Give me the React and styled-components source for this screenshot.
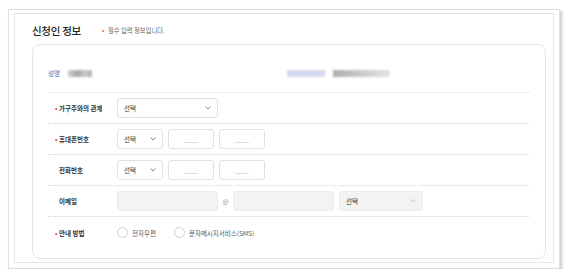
import React from "react";
import styled, { createGlobalStyle } from "styled-components";

const Global = createGlobalStyle`
  html, body { margin: 0; padding: 0; background: #fff; }
  body { font-family: "Noto Sans CJK KR", "Noto Sans", sans-serif; color: #333; }
  * { box-sizing: border-box; }
`;

const Paper = styled.div`
  margin: 9px 0 0 8px;
  width: 552px;
  height: 260px;
  border: 1px solid #dedede;
  background: #fff;
  padding: 3px 5px 5px 5px;
  box-shadow: 2px 2px 3px rgba(0, 0, 0, 0.22);
`;

const Frame = styled.div`
  height: 100%;
  border: 1px solid #e6e6e6;
  padding: 0 7px 3px 17px;
  display: flex;
  flex-direction: column;
`;

const Header = styled.div`
  height: 31px;
  padding-top: 3px;
  display: flex;
  align-items: center;
  gap: 21px;
`;

const Title = styled.h2`
  margin: 0;
  font-size: 10.5px;
  font-weight: 500;
  color: #222;
  letter-spacing: -0.3px;
`;

const Note = styled.span`
  font-size: 6.3px;
  color: #666;
  &::before {
    content: "•";
    color: #e04040;
    margin-right: 4px;
  }
`;

const Card = styled.div`
  flex: 1;
  border: 1px solid #e6e6e6;
  border-radius: 8px;
  padding: 0 15px 10px 15px;
`;

const NameRow = styled.div`
  display: grid;
  grid-template-columns: 239px 1fr;
  padding: 20px 0 11px;
  border-bottom: 1px solid #ececec;
`;

const NameCell = styled.div`
  display: flex;
  align-items: center;
  height: 16px;
  gap: ${(p) => p.$gap || 8}px;
`;

const NameLabel = styled.span`
  font-size: 6.5px;
  color: #3f6cb8;
`;

const Blur = styled.div`
  width: ${(p) => p.$w}px;
  height: ${(p) => p.$h || 7}px;
  background: ${(p) => p.$bg};
  filter: blur(0.8px);
  opacity: 0.85;
`;

const Row = styled.div`
  display: flex;
  align-items: center;
  height: 31px;
  border-bottom: 1px dotted #d6d6d6;
  &:last-child { border-bottom: none; }
`;

const Label = styled.div`
  position: relative;
  width: 69px;
  flex: none;
  padding-left: 11px;
  font-size: 6.5px;
  font-weight: 700;
  color: #333;
  ${(p) =>
    p.$req &&
    `&::before {
      content: "•";
      position: absolute;
      left: 7px;
      color: #e04040;
    }`}
`;

const Controls = styled.div`
  display: flex;
  align-items: center;
  gap: ${(p) => p.$gap ?? 5}px;
`;

const SelectBox = styled.div`
  width: ${(p) => p.$w}px;
  height: 20px;
  border: 1px solid ${(p) => (p.$disabled ? "#ececec" : "#e0e0e0")};
  background: ${(p) => (p.$disabled ? "#f3f3f3" : "#fff")};
  border-radius: 3px;
  display: flex;
  align-items: center;
  justify-content: space-between;
  padding: 0 6px 0 6px;
  font-size: 6.5px;
  color: #333;
  svg { flex: none; }
`;

const Field = styled.input`
  width: ${(p) => p.$w}px;
  height: 20px;
  border: 1px solid ${(p) => (p.$disabled ? "#ececec" : "#e0e0e0")};
  background: ${(p) => (p.$disabled ? "#f3f3f3" : "#fff")};
  border-radius: 3px;
  padding: 0;
  font-family: inherit;
  font-size: 6.5px;
  text-align: center;
  outline: none;
  &::placeholder { color: #aaa; }
`;

const At = styled.span`
  width: 15px;
  text-align: center;
  font-size: 6.5px;
  color: #999;
  margin: 0 -5px;
`;

const Radio = styled.label`
  display: flex;
  align-items: center;
  gap: 4px;
  font-size: 6.5px;
  color: #555;
`;

const Circle = styled.span`
  width: 11px;
  height: 11px;
  border-radius: 50%;
  border: 1px solid #cfcfcf;
  background: #fff;
`;

const Chevron = ({ color = "#666" }) => (
  <svg width="6" height="4" viewBox="0 0 6 4">
    <polyline points="0.5,0.5 3,3 5.5,0.5" fill="none" stroke={color} strokeWidth="0.8" />
  </svg>
);

const Select = ({ w, disabled }) => (
  <SelectBox $w={w} $disabled={disabled}>
    <span>선택</span>
    <Chevron color={disabled ? "#bbb" : "#666"} />
  </SelectBox>
);

export default function App() {
  return (
    <>
      <Global />
      <Paper>
        <Frame>
          <Header>
            <Title>신청인 정보</Title>
            <Note>필수 입력 정보입니다.</Note>
          </Header>
          <Card>
            <NameRow>
              <NameCell>
                <NameLabel>성명</NameLabel>
                <Blur $w={24} $bg="linear-gradient(90deg,#c8c8c8,#9a9a9a 40%,#bdbdbd 70%,#a8a8a8)" />
              </NameCell>
              <NameCell $gap={8}>
                <Blur $w={38} $bg="#cdd3ea" />
                <Blur $w={57} $bg="linear-gradient(90deg,#a0a0a0,#b8b8b8 35%,#cfcfcf 70%,#e0e0e0)" />
              </NameCell>
            </NameRow>
            <Row>
              <Label $req>가구주와의 관계</Label>
              <Select w={101} />
            </Row>
            <Row>
              <Label $req>휴대폰번호</Label>
              <Controls>
                <Select w={46} />
                <Field $w={46} placeholder="____" />
                <Field $w={46} placeholder="____" />
              </Controls>
            </Row>
            <Row>
              <Label>전화번호</Label>
              <Controls>
                <Select w={46} />
                <Field $w={46} placeholder="____" />
                <Field $w={46} placeholder="____" />
              </Controls>
            </Row>
            <Row>
              <Label>이메일</Label>
              <Controls>
                <Field $w={101} $disabled disabled />
                <At>@</At>
                <Field $w={101} $disabled disabled />
                <Select w={84} disabled />
              </Controls>
            </Row>
            <Row>
              <Label $req>안내 방법</Label>
              <Controls $gap={18}>
                <Radio><Circle />전자우편</Radio>
                <Radio><Circle />문자메시지서비스(SMS)</Radio>
              </Controls>
            </Row>
          </Card>
        </Frame>
      </Paper>
    </>
  );
}
